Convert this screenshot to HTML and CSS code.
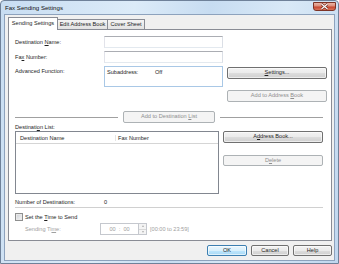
FILE: index.html
```html
<!DOCTYPE html>
<html lang="en">
  <head>
    <meta charset="UTF-8" />
    <title>Fax Sending Settings</title>
    <link rel="stylesheet" href="styles.css">
  </head>
  <body>
    <div class="window">
      <div class="titlebar">
        <span class="title">Fax Sending Settings</span>
        <button class="close" type="button">
          <svg width="9" height="7" viewBox="0 0 9 7">
            <path d="M1.5 1 L7.5 6 M7.5 1 L1.5 6" stroke="#6b2418" stroke-width="2.4" />
            <path d="M1.5 1 L7.5 6 M7.5 1 L1.5 6" stroke="#ffffff" stroke-width="1.2" />
          </svg>
        </button>
      </div>

      <div class="client">
        <div class="tabs">
          <div class="tab active">Sending Settings</div>
          <div class="tab tab-edit">Edit Address Book</div>
          <div class="tab tab-cover">Cover Sheet</div>
        </div>

        <div class="panel">
          <div class="fields">
            <label class="field-label">Destination <u>N</u>ame:</label>
            <input class="textbox" type="text" />
            <span></span>

            <label class="field-label">Fa<u>x</u> Number:</label>
            <input class="textbox" type="text" />
            <span></span>

            <label class="field-label top">Advanced Function:</label>
            <div class="advanced">
              <span class="adv-key">Subaddress:</span>
              <span>Off</span>
            </div>
            <button class="btn btn-top" type="button"><u>S</u>ettings...</button>

            <span></span>
            <span></span>
            <button class="btn" type="button" disabled>Add to Address <u>B</u>ook</button>
          </div>

          <div class="separator-row">
            <div class="rule"></div>
            <button class="btn btn-add" type="button" disabled>Add to Destination <u>L</u>ist</button>
            <div class="rule"></div>
          </div>

          <div class="list-title">Destinati<u>o</u>n List:</div>
          <div class="list-row">
            <div class="listbox">
              <div class="list-header">
                <span class="col-name">Destination Name</span>
                <span class="col-fax">Fax Number</span>
              </div>
            </div>
            <div class="list-buttons">
              <button class="btn" type="button">A<u>d</u>dress Book...</button>
              <button class="btn btn-delete" type="button" disabled>D<u>e</u>lete</button>
            </div>
          </div>

          <div class="count-row">
            <span class="count-label">Number of Destinations:</span>
            <span>0</span>
          </div>

          <div class="rule rule-full"></div>

          <div class="check-row">
            <span class="checkbox"></span>
            <span>Set the <u>T</u>ime to Send</span>
          </div>

          <div class="time-row">
            <span class="time-label">Sending Ti<u>m</u>e:</span>
            <div class="time-box">00&nbsp;&nbsp;:&nbsp;&nbsp;00</div>
            <div class="spinner">
              <span class="spin-up"></span>
              <span class="spin-down"></span>
            </div>
            <span class="time-range">[00:00 to 23:59]</span>
          </div>
        </div>

        <div class="footer">
          <button class="btn btn-ok" type="button">OK</button>
          <button class="btn btn-cancel" type="button">Cancel</button>
          <button class="btn btn-help" type="button">Help</button>
        </div>
      </div>
    </div>
  </body>
</html>
```

FILE: styles.css
```css
* {
  margin: 0;
  padding: 0;
  box-sizing: border-box;
}
body {
  font-family: "Liberation Sans", Arial, sans-serif;
  font-size: 5.6px;
  color: #1e1e1e;
  background: #ffffff;
}
u {
  text-decoration-thickness: 0.5px;
  text-underline-offset: 0.5px;
}
.window {
  width: 339px;
  height: 264px;
  display: flex;
  flex-direction: column;
  padding: 0 3px 2px 3px;
  border: 1px solid #6f8199;
  border-radius: 4px 4px 0 0;
  background: linear-gradient(100deg, #c8ddf2 0%, #dcebf8 35%, #c7dcf1 55%, #d9e9f7 75%, #c0d7ef 100%);
}
.titlebar {
  height: 13px;
  display: flex;
  justify-content: space-between;
  align-items: flex-start;
}
.title {
  font-size: 6.1px;
  line-height: 13px;
  padding-left: 1px;
  color: #111;
}
.close {
  width: 23px;
  height: 9px;
  margin-top: 1px;
  margin-right: -1px;
  display: flex;
  align-items: center;
  justify-content: center;
  border: 1px solid #7d3326;
  border-radius: 0 0 3px 3px;
  background: linear-gradient(#eab3a4 0%, #dc8c79 45%, #c6462f 55%, #d8735a 100%);
}
.client {
  flex: 1;
  display: flex;
  flex-direction: column;
  padding: 2px 2px 0 3px;
  background: #f0f0f0;
  border: 1px solid #8da2bd;
}
.tabs {
  height: 12px;
  display: flex;
  align-items: flex-end;
  position: relative;
  z-index: 1;
}
.tab {
  height: 10px;
  line-height: 9px;
  text-align: center;
  border: 1px solid #898c95;
  border-bottom: none;
  border-left: none;
  background: linear-gradient(#f4f4f4, #e2e2e2);
}
.tab.active {
  width: 50px;
  height: 13px;
  line-height: 11px;
  margin-bottom: -1px;
  border-left: 1px solid #898c95;
  background: #ffffff;
}
.tab-edit {
  width: 50px;
}
.tab-cover {
  width: 37px;
}
.panel {
  height: 212px;
  padding: 6px 7px 0 6px;
  background: #ffffff;
  border: 1px solid #898c95;
}
.fields {
  display: grid;
  grid-template-columns: 85px 119px 100px;
  grid-template-rows: 12px 12px 21px 12px;
  column-gap: 4px;
  row-gap: 3px;
}
.field-label {
  display: block;
  line-height: 12px;
}
.field-label.top {
  line-height: 10px;
}
.textbox {
  height: 12px;
  border: 1px solid;
  border-color: #abadb3 #dbdfe6 #e3e9ef #e2e3ea;
  background: #ffffff;
}
.advanced {
  display: flex;
  padding: 2px 2px;
  border: 1px solid #a9c8e6;
}
.adv-key {
  width: 48px;
}
.btn {
  height: 12px;
  padding: 0;
  line-height: 1;
  font-family: inherit;
  font-size: 5.6px;
  color: #1e1e1e;
  border: 1px solid #707070;
  border-radius: 2px;
  background: linear-gradient(#f2f2f2 0%, #ebebeb 50%, #dddddd 51%, #cfcfcf 100%);
  box-shadow: inset 0 0 0 1px rgba(255, 255, 255, 0.6);
}
.btn:disabled {
  color: #8f8f8f;
  border-color: #adb2b5;
  background: #f4f4f4;
  box-shadow: none;
}
.btn-top {
  height: 12px;
  margin-top: 1px;
}
.separator-row {
  margin-top: 9px;
  width: 308px;
  display: flex;
  align-items: center;
  gap: 5px;
}
.rule {
  flex: 1;
  height: 1px;
  background: #a0a0a0;
}
.btn-add {
  width: 92px;
}
.list-title {
  height: 7px;
  line-height: 7px;
  margin-top: 1px;
}
.list-row {
  display: flex;
  gap: 4px;
}
.listbox {
  width: 204px;
  height: 63px;
  border: 1px solid #828790;
}
.list-header {
  height: 12px;
  display: flex;
  align-items: center;
  border-bottom: 1px solid #d5d5d5;
}
.col-name {
  width: 100px;
  padding-left: 4px;
  border-right: 1px solid #e5e5e5;
}
.col-fax {
  padding-left: 2px;
}
.list-buttons {
  width: 100px;
  display: flex;
  flex-direction: column;
  gap: 12px;
}
.btn-delete {
  height: 11px;
}
.count-row {
  height: 7px;
  margin-top: 4px;
  display: flex;
  align-items: center;
}
.count-label {
  width: 89px;
}
.rule-full {
  flex: none;
  width: 308px;
  margin-top: 2px;
  background: #d0d0d0;
}
.check-row {
  height: 8px;
  margin-top: 5px;
  display: flex;
  align-items: center;
  gap: 2px;
}
.checkbox {
  width: 8px;
  height: 8px;
  border: 1px solid #8e8f8f;
  background: linear-gradient(135deg, #cbcfd5, #f6f6f6);
  box-shadow: inset 0 0 0 1px #e9e9e9;
}
.time-row {
  height: 12px;
  margin-top: 2px;
  padding-left: 10px;
  display: flex;
  align-items: center;
  color: #a0a0a0;
}
.time-label {
  width: 75px;
}
.time-box {
  width: 39px;
  height: 12px;
  line-height: 10px;
  text-align: center;
  border: 1px solid #c5c8ce;
}
.spinner {
  width: 8px;
  height: 12px;
  display: flex;
  flex-direction: column;
  border: 1px solid #c5c8ce;
  border-left: none;
}
.spin-up,
.spin-down {
  flex: 1;
  display: flex;
  align-items: center;
  justify-content: center;
  background: #f4f4f4;
}
.spin-up {
  border-bottom: 1px solid #d8d8d8;
}
.spin-up::after,
.spin-down::after {
  content: "";
  border-left: 1.5px solid transparent;
  border-right: 1.5px solid transparent;
}
.spin-up::after {
  border-bottom: 2px solid #b0b0b0;
}
.spin-down::after {
  border-top: 2px solid #b0b0b0;
}
.time-range {
  margin-left: 3px;
}
.footer {
  margin-top: 4px;
  display: flex;
  justify-content: flex-end;
  gap: 4px;
}
.footer .btn {
  height: 11px;
}
.btn-ok {
  width: 40px;
  border-color: #3c7fb1;
  background: linear-gradient(#eaf6fd 0%, #d9f0fc 50%, #bee6fd 51%, #a7d9f5 100%);
}
.btn-cancel {
  width: 38px;
}
.btn-help {
  width: 39px;
}
```
